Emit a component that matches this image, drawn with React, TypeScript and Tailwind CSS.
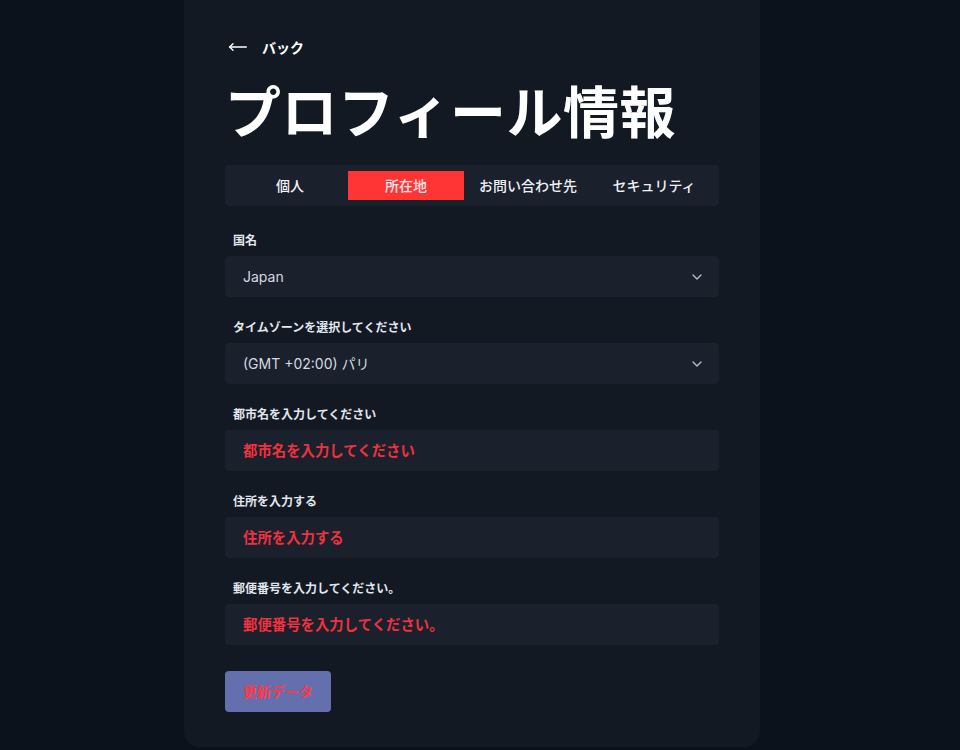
import { ChevronDown, MoveLeft } from "lucide-react";

const font = { fontFamily: '"Inter", "Noto Sans CJK JP", sans-serif' };

function SelectField({ label, value }: { label: string; value: string }) {
  return (
    <div>
      <div className="text-[12px] font-semibold leading-4 text-[#e2e6ee] pl-2 mb-[7px]">{label}</div>
      <div className="h-[41px] bg-[#1a202c] rounded-sm flex items-center justify-between pl-[18px] pr-[14px]">
        <span className="text-[14px] text-[#d5d9e2]">{value}</span>
        <ChevronDown className="w-4 h-4 text-[#b8bdc8]" strokeWidth={2} />
      </div>
    </div>
  );
}

function InputField({ label, placeholder }: { label: string; placeholder: string }) {
  return (
    <div>
      <div className="text-[12px] font-semibold leading-4 text-[#e2e6ee] pl-2 mb-[7px]">{label}</div>
      <div className="h-[41px] bg-[#1a202c] rounded-sm flex items-center pl-[18px]">
        <span className="text-[14.4px] font-semibold text-[#f0323f]">{placeholder}</span>
      </div>
    </div>
  );
}

export default function App() {
  const tabs = ["個人", "所在地", "お問い合わせ先", "セキュリティ"];
  const active = 1;

  return (
    <div className="min-h-[750px] bg-[#0c121b] flex justify-center pr-[16px]" style={font}>
      <div className="w-[576px] h-[747px] bg-[#121923] rounded-b-2xl px-[41px] pt-[37px]">
        {/* Back */}
        <div className="flex items-center gap-[14px] h-5 pl-[3px]">
          <MoveLeft className="w-5 h-5 text-white" strokeWidth={1.6} />
          <span className="text-[14px] font-bold text-white">バック</span>
        </div>

        {/* Title */}
        <h1 className="mt-[23px] text-[56px] font-bold leading-[67px] text-white tracking-[0.5px]">
          プロフィール情報
        </h1>

        {/* Tabs */}
        <div className="mt-[18px] h-[41px] bg-[#1a202c] rounded-sm flex items-center pl-[7px] pr-[7px]">
          {tabs.map((t, i) => (
            <div
              key={t}
              className={
                (i < 2 ? "w-[116px] " : "flex-1 ") +
                (i === active
                  ? "h-[29px] bg-[#ff3434] text-[#ffe9ea] "
                  : "h-[29px] text-[#eef0f4] ") +
                "flex items-center justify-center text-[14px] font-medium"
              }
            >
              <span className={i === 2 ? "pl-[4px]" : i === 3 ? "pl-[8px]" : ""}>{t}</span>
            </div>
          ))}
        </div>

        {/* Fields */}
        <div className="mt-[27px] flex flex-col gap-[23px]">
          <SelectField label="国名" value="Japan" />
          <SelectField label="タイムゾーンを選択してください" value="(GMT +02:00) パリ" />
          <InputField label="都市名を入力してください" placeholder="都市名を入力してください" />
          <InputField label="住所を入力する" placeholder="住所を入力する" />
          <InputField label="郵便番号を入力してください。" placeholder="郵便番号を入力してください。" />
        </div>

        <button className="mt-[26px] w-[106px] h-[41px] bg-[#6470ad] rounded-sm text-[14px] font-bold text-[#ff3848]">
          更新データ
        </button>
      </div>
    </div>
  );
}
